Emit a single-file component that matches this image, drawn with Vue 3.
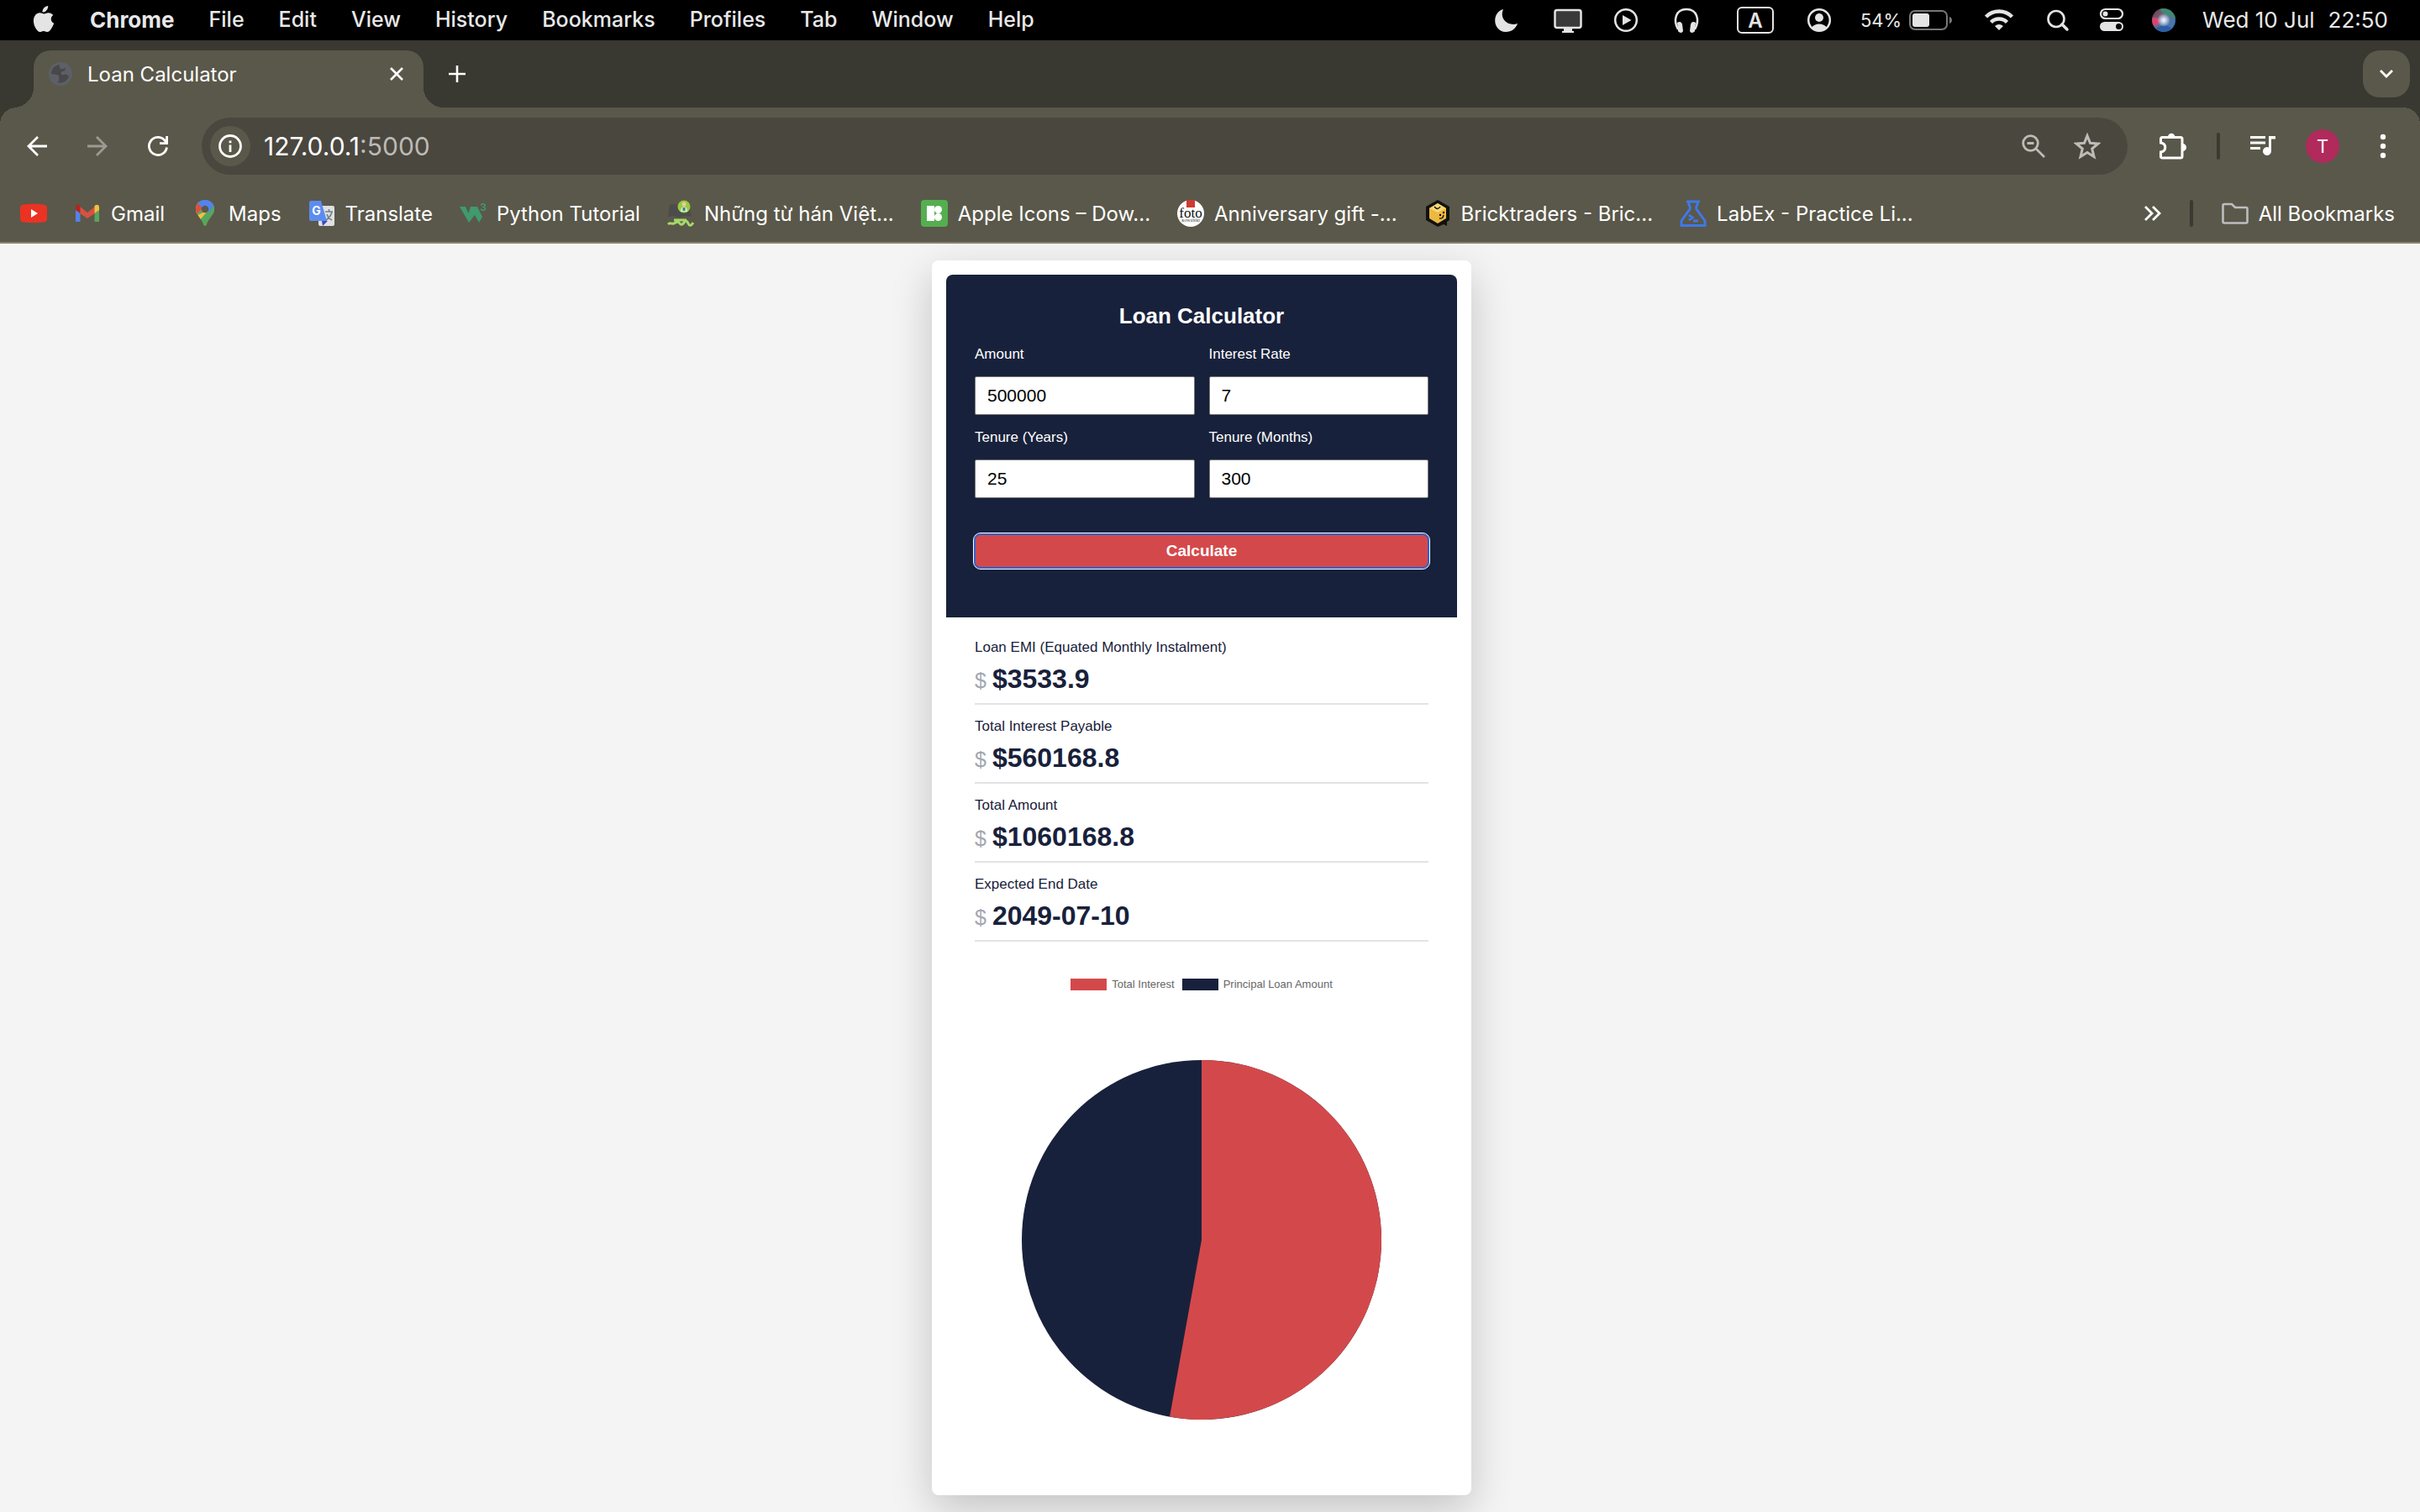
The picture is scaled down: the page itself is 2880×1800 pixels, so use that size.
<script setup>
import { computed, ref } from 'vue'

const menus = ['File', 'Edit', 'View', 'History', 'Bookmarks', 'Profiles', 'Tab', 'Window', 'Help']

const amount = ref('500000')
const rate = ref('7')
const years = ref('25')
const months = ref('300')

const loan = ref({ amount: 500000, rate: 7, months: 300 })

function calculate() {
  loan.value = {
    amount: Number(amount.value),
    rate: Number(rate.value),
    months: Number(months.value),
  }
}

function syncMonths() {
  months.value = String(Number(years.value) * 12)
}

function syncYears() {
  years.value = String(Math.round(Number(months.value) / 12))
}

const emi = computed(() => {
  const r = loan.value.rate / 1200
  const growth = Math.pow(1 + r, loan.value.months)
  return (loan.value.amount * r * growth) / (growth - 1)
})
const total = computed(() => emi.value * loan.value.months)
const interest = computed(() => total.value - loan.value.amount)

const endDate = computed(() => {
  const d = new Date(Date.UTC(2024, 6 + loan.value.months, 10))
  return d.toISOString().slice(0, 10)
})

const results = computed(() => [
  { label: 'Loan EMI (Equated Monthly Instalment)', value: '$' + emi.value.toFixed(1) },
  { label: 'Total Interest Payable', value: '$' + interest.value.toFixed(1) },
  { label: 'Total Amount', value: '$' + total.value.toFixed(1) },
  { label: 'Expected End Date', value: endDate.value },
])

// Pie slice for the interest share, clockwise from twelve o'clock
const slice = computed(() => {
  const share = interest.value / total.value
  const a = share * 2 * Math.PI
  const x = 214 + 214 * Math.sin(a)
  const y = 214 - 214 * Math.cos(a)
  return `M214 214V0A214 214 0 ${share > 0.5 ? 1 : 0} 1 ${x} ${y}Z`
})
</script>

<template>
  <div class="screen">
    <header class="menubar">
      <nav class="menus">
        <svg class="apple" width="28" height="34" viewBox="0 0 28 34" fill="#e4e4e4">
          <path d="M19.2 1c.2 2-.6 3.900-1.800 5.300-1.200 1.400-3.100 2.400-4.900 2.300-.2-1.900.7-3.900 1.800-5.100C15.500 2.100 17.600 1.100 19.200 1z" />
          <path d="M25.400 12.100c-3.900 2.400-3.300 8 .8 9.700-.9 2.600-2.100 5-3.900 7.400-1.100 1.400-2.300 2.800-4.100 2.800-1.700 0-2.300-1.100-4.300-1.100s-2.700 1.100-4.300 1.100c-1.800.1-3.100-1.500-4.200-3C2.200 24.600.500 17.300 3.400 12.900c1.400-2.200 3.700-3.600 6.100-3.600 1.900 0 3.300 1.200 4.900 1.200 1.500 0 2.800-1.300 5.200-1.300 2.100 0 4.400 1.100 5.800 2.900z" />
        </svg>
        <span class="app-name">Chrome</span>
        <span v-for="m in menus" :key="m">{{ m }}</span>
      </nav>

      <div class="status">
        <svg width="76" height="48" viewBox="-38 -24 76 48"><path d="M-4-13c-14 4-13 26 3 27 7 0 12-4 14-10-12 4-22-6-17-17z" fill="#e4e4e4" /></svg>
        <svg width="70" height="48" viewBox="-35 -24 70 48">
          <rect x="-15.500" y="-12" width="31" height="21" rx="2.500" fill="#3a3a3a" stroke="#e4e4e4" stroke-width="2.500" />
          <path d="M-5 10H5v3h2v2H-7v-2h2z" fill="#e4e4e4" />
        </svg>
        <svg width="68" height="48" viewBox="-34 -24 68 48">
          <circle r="12.800" fill="none" stroke="#e4e4e4" stroke-width="2.500" />
          <path d="M-4-6 6.500 0-4 6z" fill="#e4e4e4" />
        </svg>
        <svg width="76" height="48" viewBox="-38 -24 76 48">
          <path d="M-10 11C-16 0-13-13 0-13S16 0 10 11" fill="none" stroke="#e4e4e4" stroke-width="2.500" />
          <path d="M-11 3c3-2 5-1 6 2l1 8c-1 3-5 2-6 0zM11 3C8 1 6 2 5 5L4 13c1 3 5 2 6 0z" fill="#e4e4e4" />
        </svg>
        <svg width="88" height="48" viewBox="-44 -24 88 48">
          <rect x="-21" y="-15" width="42" height="30" rx="5" fill="none" stroke="#e4e4e4" stroke-width="2" />
          <text y="9" text-anchor="middle" class="glyph" font-size="24" font-weight="600" fill="#e4e4e4">A</text>
        </svg>
        <svg width="64" height="48" viewBox="-32 -24 64 48">
          <circle r="12.800" fill="none" stroke="#e4e4e4" stroke-width="2.500" />
          <circle cy="-3" r="5" fill="#e4e4e4" />
          <path d="M-9 9C-6 3 6 3 9 9 5 14-5 14-9 9z" fill="#e4e4e4" />
        </svg>
        <div class="battery">
          <span>54%</span>
          <svg width="52" height="24" viewBox="0 0 52 24">
            <rect x="1" y="1" width="44" height="22" rx="6" fill="none" stroke="#777" stroke-width="2" />
            <rect x="4" y="4" width="20" height="16" rx="3" fill="#e4e4e4" />
            <path d="M48 8c4 1 4 7 0 8z" fill="#777" />
          </svg>
        </div>
        <svg width="76" height="48" viewBox="-38 -24 76 48" fill="none" stroke="#e4e4e4" stroke-width="4.500">
          <path d="M-15.500-4a22 22 0 0 1 31 0M-9.500 2.500a13.500 13.500 0 0 1 19 0" />
          <path d="M-5 7Q0 3 5 7L0 12z" fill="#e4e4e4" stroke="none" />
        </svg>
        <svg width="64" height="48" viewBox="-32 -24 64 48" fill="none" stroke="#e4e4e4" stroke-linecap="round">
          <circle cx="-2" cy="-1.500" r="9.500" stroke-width="2.600" />
          <path d="m5 5 6 6" stroke-width="3.500" />
        </svg>
        <svg width="64" height="48" viewBox="-32 -24 64 48">
          <rect x="-13" y="-13" width="26" height="11" rx="5.500" fill="none" stroke="#e4e4e4" stroke-width="2.200" />
          <circle cx="-7.500" cy="-7.500" r="3" fill="#e4e4e4" />
          <rect x="-14" y="2" width="28" height="11" rx="5.500" fill="#e4e4e4" />
          <circle cx="8.500" cy="7.500" r="3.500" />
        </svg>
        <svg width="60" height="48" viewBox="-30 -24 60 48">
          <defs>
            <radialGradient id="siri-core"><stop offset="0" stop-color="#fff" /><stop offset=".35" stop-color="#dfeaff" stop-opacity=".8" /><stop offset="1" stop-color="#dfeaff" stop-opacity="0" /></radialGradient>
            <linearGradient id="siri-ball" x1="0" y1="0" x2="1" y2="1"><stop offset="0" stop-color="#7a2f45" /><stop offset=".4" stop-color="#6a6a80" /><stop offset="1" stop-color="#2d7fd0" /></linearGradient>
          </defs>
          <circle r="14" fill="url(#siri-ball)" />
          <path d="M-5-13C4-16 13-10 14-2 6-6 0-6-5-13z" fill="#3d8c70" />
          <path d="M-14-2c4-3 10 0 9 4s-5 6-8 3z" fill="#d8436f" />
          <path d="M-9 10C-3 5 5 5 9 10 3 15-4 15-9 10z" fill="#2b5ea8" />
          <circle r="8" fill="url(#siri-core)" />
        </svg>
        <div class="clock"><span>Wed 10 Jul</span><span>22:50</span></div>
      </div>
    </header>

    <div class="tabstrip">
      <div class="tab">
        <svg width="28" height="28" viewBox="0 0 28 28">
          <circle cx="14" cy="14" r="14" fill="#5c6066" />
          <path d="M13 3c-7 1-10 6-10 11l7 1c3 1 2 3 2 4 1 2 0 4-2 5 5 2 12-1 14-7-2-2-3-3-6-2-4 1-4-3-2-4 3 0 4-2 4-4-2 0-3 2-5 1-3-1-2-3-2-5z" fill="#48484a" />
        </svg>
        <span class="tab-title">Loan Calculator</span>
        <button class="icon-btn" aria-label="Close tab">
          <svg width="16" height="16" viewBox="0 0 16 16" stroke="#fff" stroke-width="2.600"><path d="m1 1 14 14M15 1 1 15" /></svg>
        </button>
      </div>
      <button class="icon-btn new-tab" aria-label="New tab">
        <svg width="20" height="20" viewBox="0 0 20 20" stroke="#fff" stroke-width="2.600"><path d="M10 0v20M0 10h20" /></svg>
      </button>
      <button class="tab-search" aria-label="Search tabs">
        <svg width="18" height="12" viewBox="0 0 18 12" fill="none" stroke="#fff" stroke-width="2.800"><path d="m2 2 7 7 7-7" /></svg>
      </button>
    </div>

    <div class="chrome">
      <div class="toolbar">
        <div class="nav-buttons">
          <button class="icon-btn" aria-label="Back">
            <svg width="24" height="24" viewBox="0 0 24 24" fill="none" stroke="#fff" stroke-width="2.800"><path d="M24 12H2M13 1 2 12l11 11" /></svg>
          </button>
          <button class="icon-btn" aria-label="Forward">
            <svg width="24" height="24" viewBox="0 0 24 24" fill="none" stroke="#9c9b93" stroke-width="2.800"><path d="M0 12h22M11 1l11 11-11 11" /></svg>
          </button>
          <button class="icon-btn" aria-label="Reload">
            <svg width="24" height="24" viewBox="0 0 24 24" fill="none" stroke="#fff" stroke-width="2.800"><path d="M22.500 13.500A10.600 10.600 0 1 1 20 5l2.500 3M22.600 0v8.600H14" /></svg>
          </button>
        </div>
        <div class="omnibox">
          <button class="site-info" aria-label="Site information">
            <svg width="28" height="28" viewBox="0 0 28 28"><circle cx="14" cy="14" r="12.500" fill="none" stroke="#fff" stroke-width="2.800" /><path d="M12.600 12.500h2.800V21h-2.800zM12.600 7.500h2.800v2.800h-2.800z" fill="#fff" /></svg>
          </button>
          <span class="url">127.0.0.1<span class="port">:5000</span></span>
          <svg width="28" height="28" viewBox="0 0 28 28" fill="none" stroke="#bdbcb6" stroke-width="2.800"><circle cx="10.500" cy="10.500" r="8.800" /><path d="M6.500 10.500h8M16.500 16.500 27 27" /></svg>
          <svg class="star" width="32" height="32" viewBox="0 0 32 32" fill="none" stroke="#bdbcb6" stroke-width="3"><path d="m16 3.500 3.500 8.800 9.500.7-7.300 6.100 2.300 9.300-8-5-8 5 2.300-9.300L3 13l9.500-.7z" /></svg>
        </div>
        <div class="actions">
          <svg width="32" height="34" viewBox="0 0 32 34"><path d="M3 6.500h22a2 2 0 0 1 2 2V29a2 2 0 0 1-2 2H3a1.500 1.500 0 0 1-1.500-1.500V24c7-1 7-10 0-11V8A1.500 1.500 0 0 1 3 6.500z" fill="none" stroke="#fff" stroke-width="3" /><path d="M10 6a4.200 4.200 0 0 1 8.400 0zM27.500 14a4.500 4.500 0 0 1 0 9z" fill="#fff" /></svg>
          <span class="divider"></span>
          <svg width="30" height="24" viewBox="0 0 30 24" fill="#fff"><path d="M0 0h18v3H0zM0 6.500h18v3H0zM0 13h12v3H0zM22 0h8v3.500h-5V18a5 5 0 1 1-3-4.600z" /></svg>
          <span class="avatar">T</span>
          <svg width="8" height="30" viewBox="0 0 8 30" fill="#fff"><circle cx="4" cy="4" r="3.200" /><circle cx="4" cy="15" r="3.200" /><circle cx="4" cy="26" r="3.200" /></svg>
        </div>
      </div>

      <div class="bookmarks">
        <a href="#" aria-label="YouTube">
          <svg width="32" height="32" viewBox="0 0 32 32"><path d="M4 5.500q12-1.500 24 0 4 .5 4 4v13q0 3.500-4 4-12 1.500-24 0-4-.5-4-4v-13q0-3.500 4-4z" fill="#ea3323" /><path d="m13 11 8 5-8 5z" fill="#fff" /></svg>
        </a>
        <a href="#">
          <svg width="32" height="32" viewBox="0 0 32 32"><path d="M2 9v17h5.500V13z" fill="#5383ec" /><path d="M30 9v17h-5.500V13z" fill="#58a55c" /><path d="m7 8 9 7 9-7v8l-9 6-9-6z" fill="#d85140" /><path d="M2 9c0-4 3-4 5.500-2v9L2 12z" fill="#b3261e" /><path d="M30 9c0-4-3-4-5.500-2v9l5.500-4z" fill="#f1bf42" /></svg>
          <span>Gmail</span>
        </a>
        <a href="#">
          <svg width="32" height="32" viewBox="0 0 32 32"><clipPath id="pin"><path d="M16 0C9 0 5 5 5 11c0 7 7 11 9 18 .5 2.500 3.500 2.500 4 0 2-7 9-11 9-18 0-6-4-11-11-11z" /></clipPath><g clip-path="url(#pin)"><path d="M0 0h32v32H0z" fill="#58a55c" /><path d="M3 20 18 6 5 0v30L20 12z" fill="#f1bf42" /><path d="M0 2h12l5 5L5 18z" fill="#d85140" /><path d="M8 0h20v8l-8 8-12-11z" fill="#5383ec" /><path d="M20 15 28 5v13H16z" fill="#58a55c" /></g><circle cx="16" cy="11" r="4.200" fill="#5a584a" /></svg>
          <span>Maps</span>
        </a>
        <a href="#">
          <svg width="32" height="32" viewBox="0 0 32 32"><rect x="12" y="7" width="19" height="24" rx="2" fill="#e0e0e0" /><path d="M16 25h7l-6 6z" fill="#3a49c0" /><path d="M3 1h12l7 24H3q-2 0-2-2V3q0-2 2-2z" fill="#5b8cf0" /><path d="M20 14h9M24.500 11v3M28 14c-1 5-4 8-7 10M22 17c1 3 4 6 6 7" fill="none" stroke="#6d8290" stroke-width="1.600" /><text x="9.500" y="18" text-anchor="middle" class="glyph" font-size="14" font-weight="700" fill="#fff">G</text></svg>
          <span>Translate</span>
        </a>
        <a href="#">
          <svg width="32" height="32" viewBox="0 0 32 32"><path d="M0 8h7l3.500 8L13 8h8l6 12-4 7-5-9-7 9z" fill="#3f9a6c" /><text x="28" y="13" text-anchor="middle" class="glyph" font-size="12" font-weight="600" fill="#3f9a6c">3</text></svg>
          <span>Python Tutorial</span>
        </a>
        <a href="#">
          <svg width="32" height="32" viewBox="0 0 32 32"><path d="M3 6q7-3 11 2v13q-5-3-13-1zM14 8q5-4 12-2l3 14q-8-2-15 1z" fill="#4c4c4c" /><circle cx="20" cy="8" r="7.500" fill="#9acb3c" /><circle cx="20" cy="5" r="2.500" fill="#efc9a4" /><path d="M16 14q0-6 4-6t4 6z" fill="#d3ecdc" /><path d="M18.500 9h3v4h-3z" fill="#2f8f6b" /><path d="M8 24h15M1 29q2-2 4-1t5-1 5 1 5-1 5 1 6-1" fill="none" stroke="#a5d96a" stroke-width="3" /></svg>
          <span>Những từ hán Việt...</span>
        </a>
        <a href="#">
          <svg width="32" height="32" viewBox="0 0 32 32"><rect width="32" height="32" rx="4" fill="#55ae50" /><path d="M7 7h9v18H7z" fill="#fff" /><circle cx="20.500" cy="11.500" r="4.500" fill="#fff" /><circle cx="20.500" cy="20.500" r="4.500" fill="#fff" /></svg>
          <span>Apple Icons – Dow...</span>
        </a>
        <a href="#">
          <svg width="32" height="32" viewBox="0 0 32 32"><circle cx="16" cy="16" r="16" fill="#fff" /><path d="M11 0h10v9H11z" fill="#cf3a30" /><text x="16" y="21" text-anchor="middle" class="serif" font-size="17" fill="#111">foto</text><text x="16" y="26" text-anchor="middle" class="serif" font-size="6" fill="#444">kowalski</text></svg>
          <span>Anniversary gift -...</span>
        </a>
        <a href="#">
          <svg width="32" height="32" viewBox="0 0 32 32"><path d="m16 0 14 8v16l-3 2v5l-4-2-7 3-14-8V8z" fill="#111" /><path d="m16 4 10 6v12l-10 6-10-6V10z" fill="#edb83f" /><path d="m16 4 10 6-10 5L6 10z" fill="#f7d774" /><path d="M12 8q4 5 7 0M18 22q4 1 5-4" fill="none" stroke="#111" stroke-width="1.400" /><circle cx="19" cy="18" r="1.200" /><circle cx="23" cy="15" r="1.200" /></svg>
          <span>Bricktraders - Bric...</span>
        </a>
        <a href="#">
          <svg width="32" height="32" viewBox="0 0 32 32" fill="none" stroke="#3f78e8" stroke-width="3"><path d="M8 2h16M11 2v4q2 2 1 5L2 25v5.500h28V25L20 11q-1-3 1-5V2M11 18l4 3-4 3" /><path d="M16 25h6" /></svg>
          <span>LabEx - Practice Li...</span>
        </a>
        <div class="bookmarks-end">
          <svg width="20" height="18" viewBox="0 0 20 18" fill="none" stroke="#fff" stroke-width="2.800"><path d="m1 1 8 8-8 8M10 1l8 8-8 8" /></svg>
          <span class="divider"></span>
          <a href="#">
            <svg width="32" height="26" viewBox="0 0 32 26" fill="none" stroke="#bdbdc0" stroke-width="2.600"><path d="M3 2h9l4 4h13q1.500 0 1.500 1.500V23q0 1.500-1.500 1.500H3Q1.500 24.500 1.500 23V3.500Q1.500 2 3 2z" /></svg>
            <span>All Bookmarks</span>
          </a>
        </div>
      </div>
    </div>

    <main class="page">
      <section class="card">
        <form class="panel" @submit.prevent="calculate">
          <h1>Loan Calculator</h1>
          <div class="fields">
            <div class="field">
              <label for="amount">Amount</label>
              <input id="amount" v-model="amount" type="text" inputmode="numeric" />
            </div>
            <div class="field">
              <label for="rate">Interest Rate</label>
              <input id="rate" v-model="rate" type="text" inputmode="decimal" />
            </div>
            <div class="field">
              <label for="years">Tenure (Years)</label>
              <input id="years" v-model="years" type="text" inputmode="numeric" @input="syncMonths" />
            </div>
            <div class="field">
              <label for="months">Tenure (Months)</label>
              <input id="months" v-model="months" type="text" inputmode="numeric" @input="syncYears" />
            </div>
          </div>
          <button class="calculate" type="submit">Calculate</button>
        </form>

        <dl class="results">
          <div v-for="r in results" :key="r.label" class="result">
            <dt>{{ r.label }}</dt>
            <dd><span class="unit">$</span>{{ r.value }}</dd>
          </div>
        </dl>

        <div class="chart">
          <div class="legend">
            <span class="key"><i class="swatch interest"></i>Total Interest</span>
            <span class="key"><i class="swatch principal"></i>Principal Loan Amount</span>
          </div>
          <svg class="pie" viewBox="0 0 428 428">
            <circle cx="214" cy="214" r="214" fill="#18213b" />
            <path :d="slice" fill="#d3494b" />
          </svg>
        </div>
      </section>
    </main>
  </div>
</template>

<style>
body {
  background: #f4f4f4;
}
</style>

<style scoped>
* {
  box-sizing: border-box;
}

.screen {
  min-height: 100vh;
  display: flex;
  flex-direction: column;
  font-family: Inter, 'Liberation Sans', sans-serif;
}

svg {
  display: block;
  flex: none;
}

.glyph {
  font-family: Inter, sans-serif;
}

.serif {
  font-family: 'Liberation Serif', serif;
}

.icon-btn {
  display: flex;
  padding: 0;
  border: 0;
  background: none;
}

/* System menu bar */
.menubar {
  display: flex;
  justify-content: space-between;
  align-items: center;
  height: 48px;
  padding: 0 38px;
  background: #000;
  color: #e8e8e8;
  font-size: 26px;
  white-space: nowrap;
}

.menus {
  display: flex;
  align-items: center;
  gap: 41px;
  padding-bottom: 2px;
  font-size: 25px;
  font-weight: 500;
}

.app-name {
  font-size: 26px;
  font-weight: 700;
}

.status {
  display: flex;
  align-items: center;
}

.battery {
  display: flex;
  justify-content: center;
  align-items: center;
  gap: 9px;
  width: 144px;
  font-size: 22px;
}

.clock {
  display: flex;
  gap: 16px;
  margin-left: 16px;
  padding-bottom: 2px;
}

/* Tabs */
.tabstrip {
  display: flex;
  align-items: center;
  height: 80px;
  padding: 12px 12px 0 40px;
  background: #393831;
}

.tab {
  position: relative;
  display: flex;
  align-items: center;
  width: 464px;
  height: 68px;
  padding: 0 24px 12px 18px;
  border-radius: 20px 20px 0 0;
  background: #5a584a;
  color: #fff;
  font-size: 24px;
}

.tab::before,
.tab::after {
  content: '';
  position: absolute;
  bottom: 0;
  width: 24px;
  height: 24px;
}

.tab::before {
  right: 100%;
  background: radial-gradient(circle at 0 0, transparent 24px, #5a584a 24px);
}

.tab::after {
  left: 100%;
  background: radial-gradient(circle at 100% 0, transparent 24px, #5a584a 24px);
}

.tab-title {
  flex: 1;
  margin-left: 18px;
}

.new-tab {
  margin: 0 0 12px 30px;
}

.tab-search {
  display: flex;
  justify-content: center;
  align-items: center;
  width: 56px;
  height: 56px;
  margin: 0 0 12px auto;
  border: 0;
  border-radius: 20px;
  background: #5a584a;
}

/* Toolbar and bookmarks */
.chrome {
  border-bottom: 2px solid #858074;
  background: radial-gradient(circle at 20px 20px, #5a584a 20px, #393831 20px) 0 0 / 20px 20px no-repeat,
    radial-gradient(circle at 0 20px, #5a584a 20px, #393831 20px) 100% 0 / 20px 20px no-repeat, #5a584a;
}

.toolbar {
  display: flex;
  align-items: center;
  padding: 12px 40px 12px 32px;
}

.nav-buttons {
  display: flex;
  gap: 48px;
  width: 208px;
}

.omnibox {
  flex: 1;
  display: flex;
  align-items: center;
  height: 68px;
  padding: 0 32px 0 10px;
  border-radius: 34px;
  background: #4a473f;
}

.site-info {
  display: flex;
  justify-content: center;
  align-items: center;
  width: 48px;
  height: 48px;
  padding: 0;
  border: 0;
  border-radius: 50%;
  background: #5a584a;
}

.url {
  flex: 1;
  margin-left: 16px;
  color: #fff;
  font-size: 30px;
}

.port {
  color: #bdbab4;
}

.star {
  margin-left: 34px;
}

.actions {
  display: flex;
  align-items: center;
  gap: 36px;
  margin-left: 38px;
}

.divider {
  width: 4px;
  height: 32px;
  border-radius: 2px;
  background: #3b3931;
}

.avatar {
  width: 40px;
  height: 40px;
  border-radius: 50%;
  background: #b02a5b;
  color: #fff;
  font-size: 22px;
  line-height: 40px;
  text-align: center;
}

.actions .avatar + svg {
  margin-left: 12px;
}

.bookmarks {
  display: flex;
  align-items: center;
  gap: 32px;
  height: 68px;
  padding: 0 30px 0 24px;
  font-size: 24px;
  white-space: nowrap;
}

.bookmarks a {
  display: flex;
  align-items: center;
  gap: 12px;
  color: #fff;
  text-decoration: none;
}

.bookmarks-end {
  display: flex;
  align-items: center;
  gap: 34px;
  margin-left: auto;
}

/* Page */
.page {
  flex: 1;
  padding: 20px 20px 20px 0;
  background: #f4f4f4;
  font-family: 'Liberation Sans', Arial, sans-serif;
  overflow: hidden;
}

.card {
  width: 642px;
  margin: 0 auto;
  padding: 17px;
  border-radius: 8px;
  background: #fff;
  box-shadow: 0 17px 50px rgba(0, 0, 0, 0.2);
  color: #18213b;
}

.panel {
  padding: 34px 34px 59px;
  border-radius: 8px 8px 0 0;
  background: #18213b;
  color: #fff;
}

.panel h1 {
  margin: 0 0 21px;
  font-size: 26px;
  line-height: 30px;
  text-align: center;
}

.fields {
  display: grid;
  grid-template-columns: 1fr 1fr;
  gap: 17px;
}

.field {
  display: flex;
  flex-direction: column;
  gap: 16px;
  min-width: 0;
}

.field label {
  font-size: 17px;
  line-height: 20px;
}

.field input {
  width: 100%;
  height: 46px;
  padding: 0 14px;
  border: 1px solid #767676;
  border-radius: 2px;
  background: #fff;
  color: #000;
  font-family: inherit;
  font-size: 21px;
}

.calculate {
  display: block;
  width: 100%;
  height: 40px;
  margin-top: 43px;
  border: 0;
  border-radius: 7px;
  outline: 1px solid #fff;
  outline-offset: 1px;
  background: #d3494b;
  box-shadow: 0 0 0 1px #2a63d4, inset 0 0 0 1px #2a63d4;
  color: #fff;
  font-family: inherit;
  font-size: 19px;
  font-weight: 700;
}

.results {
  display: flex;
  flex-direction: column;
  gap: 16px;
  margin: 0;
  padding: 26px 34px 0;
}

.result {
  padding-bottom: 11px;
  border-bottom: 2px solid #e2e3e6;
}

.result dt {
  margin-bottom: 9px;
  font-size: 17px;
  line-height: 20px;
}

.result dd {
  display: flex;
  align-items: baseline;
  gap: 7px;
  margin: 0;
  font-size: 32px;
  font-weight: 700;
  line-height: 36px;
}

.unit {
  color: #a3a6b1;
  font-size: 25px;
  font-weight: 400;
  line-height: 25px;
}

.chart {
  display: flex;
  flex-direction: column;
  align-items: center;
  gap: 83px;
  padding: 44px 34px 73px;
}

.legend {
  display: flex;
  gap: 9px;
  color: #666;
  font-size: 13px;
  line-height: 14px;
}

.key {
  display: flex;
  align-items: center;
  gap: 6px;
}

.swatch {
  width: 43px;
  height: 14px;
}

.swatch.interest {
  background: #d3494b;
}

.swatch.principal {
  background: #18213b;
}

.pie {
  width: 100%;
  max-width: 428px;
}
</style>
